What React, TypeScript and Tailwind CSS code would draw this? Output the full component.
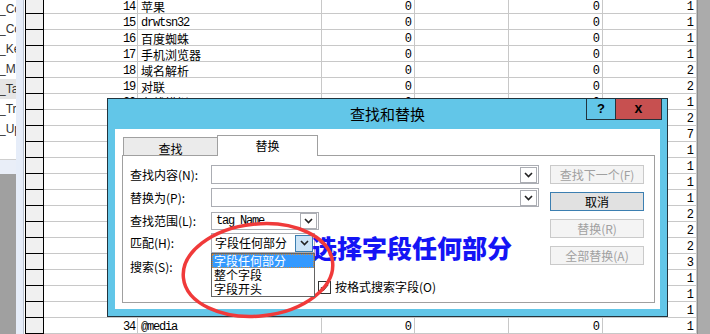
import React from "react";

const cjk = "font-['Noto_Sans_CJK_SC',sans-serif]";
const mono = "font-['Liberation_Mono','Noto_Sans_CJK_SC',monospace]";

const navItems = ["_Co", "_Co", "_Ke", "_M", "_Ta", "_Tr", "_Up"];

const rows: [number, string, number][] = [
  [14, "苹果", 1],
  [15, "drwtsn32", 1],
  [16, "百度蜘蛛", 1],
  [17, "手机浏览器", 1],
  [18, "域名解析", 2],
  [19, "对联", 2],
  [20, "在线模拟器", 1],
  [21, "网页设计", 2],
  [22, "搜索引擎", 7],
  [23, "邮箱", 1],
  [24, "天气预报", 1],
  [25, "地图", 1],
  [26, "翻译", 1],
  [27, "快递查询", 2],
  [28, "火车票", 2],
  [29, "计算器", 2],
  [30, "万年历", 3],
  [31, "音乐", 1],
  [32, "视频", 1],
  [33, "小说", 1],
  [34, "@media", 1],
];

function Chevron() {
  return (
    <svg width="9" height="6" viewBox="0 0 9 6">
      <path d="M1 1 L4.5 4.5 L8 1" fill="none" stroke="#222" strokeWidth="1.6" />
    </svg>
  );
}

function ArrowBox({ active }: { active?: boolean }) {
  return (
    <div
      className={
        active
          ? "w-[18px] h-[17px] border border-[#3c7fb1] bg-[#cce4f7] flex items-center justify-center"
          : "w-[17px] h-[16px] border border-[#abadb3] bg-white flex items-center justify-center"
      }
    >
      <Chevron />
    </div>
  );
}

function Button({ label, primary }: { label: string; primary?: boolean }) {
  return (
    <div
      className={
        primary
          ? "h-[19px] border border-[#3c7fb1] bg-[#e1e1e1] text-black flex items-center justify-center text-[12px]"
          : "h-[19px] border border-[#cacaca] bg-[#f4f4f4] text-[#a0a0a0] flex items-center justify-center text-[12px]"
      }
    >
      {label}
    </div>
  );
}

function Label({ text }: { text: string }) {
  return <div className="w-[81px] shrink-0 text-[12px] text-black leading-none">{text}</div>;
}

export default function App() {
  return (
    <div className="relative w-[710px] h-[334px] overflow-hidden bg-white flex">
      {/* navigation pane */}
      <div className="w-[16px] shrink-0 flex flex-col overflow-hidden">
        <div className="h-[160px] -mt-px font-['Liberation_Sans',sans-serif] text-[12px] text-[#333]">
          {navItems.map((n, i) => (
            <div
              key={i}
              className={
                i === 4
                  ? "h-[20px] -ml-px flex items-center whitespace-nowrap bg-[#e5e5e5]"
                  : "h-[20px] -ml-px flex items-center whitespace-nowrap"
              }
            >
              {n}
            </div>
          ))}
        </div>
        <div className="h-[15px] border-t border-[#cfcfcf] bg-[#e9eef8]" />
        <div className="flex-1 bg-[#a0a0a0]" />
      </div>
      <div className="w-[8px] shrink-0 bg-[#e6edf9] border-r border-[#b9c2cf]" />
      <div className="w-[1px] shrink-0 bg-white" />

      {/* datasheet */}
      <div className="flex flex-col -mt-[2px]">
        {rows.map(([id, name, v]) => {
          const latin = /^[\x00-\x7f]+$/.test(name);
          return (
            <div key={id} className="flex h-[16px] shrink-0 text-[12px] text-black">
              <div className="w-[19px] h-full bg-[#f0f0f0] border-l border-r border-b border-black" />
              <div className={`w-[94px] border-r border-b border-[#c8c8c8] flex items-center justify-end pr-[2px] pt-[3px] ${mono} tracking-[-1.2px]`}>
                {id}
              </div>
              <div
                className={`w-[184px] border-r border-b border-[#c8c8c8] flex items-center pl-[3px] pt-[3px] whitespace-nowrap ${
                  latin ? `${mono} tracking-[-1.2px]` : cjk
                }`}
              >
                {name}
              </div>
              <div className={`w-[93px] border-r border-b border-[#c8c8c8] flex items-center justify-end pr-[2px] pt-[3px] ${mono}`}>0</div>
              <div className="w-[94px] border-r border-b border-[#c8c8c8]" />
              <div className={`w-[94px] border-r border-b border-[#c8c8c8] flex items-center justify-end pr-[2px] pt-[3px] ${mono}`}>0</div>
              <div className={`w-[94px] border-r border-b border-[#c8c8c8] flex items-center justify-end pr-[2px] pt-[3px] ${mono}`}>{v}</div>
            </div>
          );
        })}
      </div>
      <div className="flex-1 bg-[#ababab] border-l border-[#8c8c8c]" />

      {/* find and replace dialog */}
      <div className={`absolute left-[107px] top-[98px] w-[561px] h-[219px] border border-[#22343e] bg-[#62c6e8] flex flex-col ${cjk}`}>
        <div className="relative h-[30px] shrink-0 flex items-center justify-center">
          <span className="text-[15px] text-black">查找和替换</span>
          <div className="absolute -top-px right-[5px] flex">
            <div className="w-[30px] h-[22px] border border-[#22343e] flex items-center justify-center font-['Liberation_Sans',sans-serif] font-bold text-[13px] text-black">
              ?
            </div>
            <div className="w-[47px] h-[22px] -ml-px border border-[#22343e] bg-[#c75050] flex items-center justify-center font-['Liberation_Sans',sans-serif] font-bold text-[14px] text-black leading-none pb-[2px]">
              x
            </div>
          </div>
        </div>

        <div className="mx-[7px] h-[180px] bg-white flex flex-col">
          {/* tabs */}
          <div className="mt-[6px] ml-[8px] h-[21px] flex items-end">
            <div className="w-[95px] h-[19px] border-t border-l border-r border-[#a0a0a0] bg-[#ebebeb] flex items-center justify-center text-[12px] text-black pt-[3px]">
              查找
            </div>
            <div className="relative z-10 w-[101px] h-[21px] -ml-px border-t border-l border-r border-[#a0a0a0] bg-white flex items-center justify-center text-[12px] text-black">
              替换
            </div>
          </div>

          {/* tab panel */}
          <div className="relative -mt-px ml-[7px] w-[533px] h-[148px] border border-[#a0a0a0] flex">
            <div className="w-[427px] pl-[7px] pt-[9px] flex flex-col">
              <div className="h-[19px] flex items-center">
                <Label text="查找内容(N):" />
                <div className="w-[328px] h-full border border-[#abadb3] flex items-center justify-end pr-px">
                  <ArrowBox />
                </div>
              </div>
              <div className="mt-[4px] h-[19px] flex items-center">
                <Label text="替换为(P):" />
                <div className="w-[328px] h-full border border-[#abadb3] flex items-center justify-end pr-px">
                  <ArrowBox />
                </div>
              </div>
              <div className="mt-[5px] h-[18px] flex items-center">
                <Label text="查找范围(L):" />
                <div className="w-[108px] h-full border border-[#abadb3] flex items-center justify-between pl-[4px] pr-px">
                  <span className={`${mono} text-[12px] tracking-[-1.2px] leading-none`}>tag Name</span>
                  <ArrowBox />
                </div>
              </div>
              <div className="mt-[3px] h-[20px] flex items-center">
                <Label text="匹配(H):" />
                <div className="relative w-[104px] h-full">
                  <div className="w-full h-full border border-[#abadb3] flex items-center justify-between pl-[3px] pr-px">
                    <span className="text-[12px] leading-none">字段任何部分</span>
                    <ArrowBox active />
                  </div>
                  <div className="absolute left-0 top-full z-10 w-[104px] border border-[#646464] bg-white text-[12px] leading-none">
                    <div className="h-[14px] bg-[#3399ff] text-white border border-dotted border-[#d08a3c] flex items-center pl-[1px]">
                      字段任何部分
                    </div>
                    <div className="h-[14px] flex items-center pl-[2px]">整个字段</div>
                    <div className="h-[14px] flex items-center pl-[2px]">字段开头</div>
                  </div>
                </div>
              </div>
              <div className="mt-[4px] h-[19px] flex items-center">
                <Label text="搜索(S):" />
              </div>
              <div className="mt-[4px] h-[14px] flex items-center">
                <div className="ml-[188px] w-[13px] h-[13px] border border-[#333] bg-white flex items-center justify-center">
                  <svg width="9" height="9" viewBox="0 0 9 9">
                    <path d="M1 4.5 L3.5 7 L8 1.5" fill="none" stroke="#222" strokeWidth="1.5" />
                  </svg>
                </div>
                <span className="ml-[4px] text-[12px] leading-none">按格式搜索字段(O)</span>
              </div>
            </div>
            <div className="w-[94px] pt-[9px] flex flex-col gap-[8px]">
              <Button label="查找下一个(F)" />
              <Button label="取消" primary />
              <Button label="替换(R)" />
              <Button label="全部替换(A)" />
            </div>
          </div>
        </div>
      </div>

      {/* annotations */}
      <div className={`absolute left-[312px] top-[235px] text-[25px] leading-[25px] font-black text-[#1414f5] whitespace-nowrap ${cjk}`}>
        选择字段任何部分
      </div>
      <svg className="absolute left-0 top-0 pointer-events-none" width="710" height="334">
        <ellipse cx="258" cy="270" rx="75" ry="46" transform="rotate(-6 258 270)" fill="none" stroke="#f03a3a" strokeWidth="3.5" />
      </svg>
    </div>
  );
}
